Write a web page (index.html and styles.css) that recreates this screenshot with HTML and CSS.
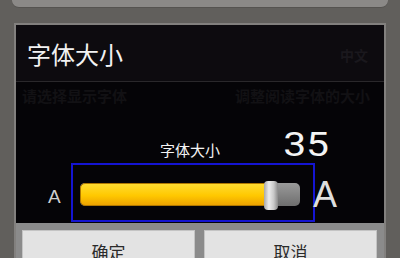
FILE: index.html
```html
<!DOCTYPE html>
<html lang="zh-CN">

<head>
    <meta charset="UTF-8">
    <meta name="viewport" content="width=device-width, initial-scale=1.0">
    <title>字体大小</title>
    <link rel="stylesheet" href="styles.css">
</head>

<body>
    <div class="topbar"></div>
    <div class="dialog">
        <div class="title">
            <span>字体大小</span>
            <span class="ghost">中文</span>
        </div>
        <div class="content">
            <div class="ghost-row">
                <span>请选择显示字体</span>
                <span>调整阅读字体的大小</span>
            </div>
            <div class="head-row">
                <span class="label">字体大小</span>
                <span class="value">35</span>
            </div>
            <div class="slider-row">
                <span class="a-small">A</span>
                <div class="slider-box">
                    <div class="track">
                        <div class="fill" style="width: 191px"></div>
                        <div class="thumb"></div>
                    </div>
                </div>
                <span class="a-big">A</span>
            </div>
        </div>
        <div class="buttons">
            <div class="btn">确定</div>
            <div class="btn">取消</div>
        </div>
    </div>
</body>

</html>
```

FILE: styles.css
```css
* {
    margin: 0;
    padding: 0;
    box-sizing: border-box;
}

body {
    width: 400px;
    height: 258px;
    overflow: hidden;
    background-color: #615f5c;
    font-family: "Noto Sans CJK SC", "Liberation Sans", sans-serif;
}

.topbar {
    height: 8px;
    margin: 0 12px;
    background-color: #8b8987;
    border-radius: 0 0 7px 7px;
    border-bottom: 1px solid #555350;
}

.dialog {
    margin: 15px 14px 0 14px;
    border: 2px solid #82807e;
    border-bottom: none;
}

.title {
    height: 57px;
    display: flex;
    justify-content: space-between;
    align-items: center;
    padding: 0 16px 0 11px;
    background-color: #0d0b0f;
    border-bottom: 1px solid #2a282b;
    color: #f2f2f2;
    font-size: 24px;
}

.title .ghost {
    font-size: 14px;
    font-weight: bold;
    color: #1a181d;
    margin-top: 4px;
}

.content {
    height: 141px;
    background-color: #050407;
}

.ghost-row {
    height: 26px;
    display: flex;
    justify-content: space-between;
    align-items: center;
    padding: 0 14px 0 6px;
    font-size: 15px;
    font-weight: bold;
    color: #121114;
}

.head-row {
    height: 33px;
    margin-top: 20px;
    display: flex;
    align-items: baseline;
    padding-left: 144px;
    color: #f4f4f4;
}

.label {
    font-size: 15px;
}

.value {
    display: inline-block;
    margin-left: 67px;
    font-family: Roboto, "DejaVu Sans", sans-serif;
    font-size: 34px;
    line-height: 33px;
    transform: scaleX(1.2);
}

.slider-row {
    margin-top: 2px;
    display: flex;
    align-items: center;
    padding-left: 32px;
}

.a-small {
    width: 23px;
    font-family: "Liberation Sans", sans-serif;
    font-size: 19px;
    color: #cfcfcf;
    margin-top: 8px;
}

.slider-box {
    width: 244px;
    height: 59px;
    border: 2px solid #1414d2;
    padding: 18px 0 0 7px;
}

.track {
    position: relative;
    width: 220px;
    height: 23px;
    border-radius: 5px;
    background: linear-gradient(#9a9a9a, #6e6e6e);
}

.fill {
    height: 23px;
    border-radius: 5px 0 0 5px;
    border: 1px solid #b07800;
    background: linear-gradient(#ffdc30, #ffc800 55%, #eda300);
}

.thumb {
    position: absolute;
    left: 184px;
    top: -2px;
    width: 14px;
    height: 29px;
    border-radius: 4px;
    background: linear-gradient(90deg, #a8a8a8, #ececec 35%, #c8c8c8 70%, #8a8a8a);
}

.a-big {
    margin-left: -2px;
    font-family: "Liberation Sans", sans-serif;
    font-size: 36px;
    color: #dedede;
    margin-top: 4px;
}

.buttons {
    height: 40px;
    display: flex;
    gap: 9px;
    padding: 7px 7px 0 6px;
    background-color: #8b8b8b;
}

.btn {
    flex: 1;
    height: 40px;
    border: 1px solid #c4c4c4;
    background-color: #e3e3e3;
    text-align: center;
    padding-top: 9px;
    font-size: 17px;
    line-height: 24px;
    color: #2a2a2a;
}
```
